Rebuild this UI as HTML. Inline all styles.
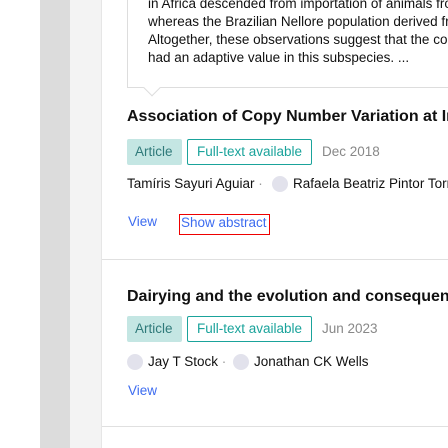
<!DOCTYPE html>
<html><head><style>
*{margin:0;padding:0;box-sizing:border-box}
html,body{width:448px;height:448px;overflow:hidden}
body{background:#fff;font-family:"Liberation Sans",sans-serif}
#w{position:relative;width:448px;height:448px;overflow:hidden}
.a{position:absolute;white-space:nowrap}
.t{font-size:13.5px;color:#111;line-height:18px}
.h{font-size:16px;font-weight:bold;color:#111}
.tag{position:absolute;height:26px;line-height:26px;font-size:13.5px;border-radius:2px}
.art{background:#c4e6e3;color:#2f7a7a;padding:0 8px;width:55px}
.ft{border:1px solid #1aa39b;color:#1aa39b;width:125px;text-align:center;line-height:24px}
.d{font-size:13.5px;color:#888}
.l{font-size:13.5px;color:#3d6cf0}
.c{position:absolute;width:16px;height:16px;border-radius:50%;background:#e2e2ec}
</style></head><body><div id="w">
<div class="a" style="left:40px;top:0;width:30px;height:448px;background:#dcdcdc"></div>
<div class="a" style="left:70px;top:0;width:31px;height:448px;background:#f3f3f3"></div>
<div class="a" style="left:101px;top:0;width:347px;height:448px;background:#fff;border-left:1px solid #e6e6e6"></div>
<div class="a" style="left:127px;top:-2px;width:330px;height:90px;border:1px solid #ddd;border-top:none"></div>
<div class="a" style="left:146px;top:82px;width:12px;height:12px;background:#fff;border-right:1px solid #ddd;border-bottom:1px solid #ddd;transform:rotate(45deg)"></div>
<div class="a t" style="left:148px;top:-5px">in Africa descended from importation of animals from</div>
<div class="a t" style="left:148px;top:13px">whereas the Brazilian Nellore population derived from</div>
<div class="a t" style="left:148px;top:31px">Altogether, these observations suggest that the copy</div>
<div class="a t" style="left:148px;top:49px">had an adaptive value in this subspecies. ...</div>
<div class="a h" style="left:127px;top:108px">Association of Copy Number Variation at Intron 3</div>
<div class="tag art" style="left:127px;top:139px">Article</div>
<div class="tag ft" style="left:187px;top:139px">Full-text available</div>
<div class="a d" style="left:322px;top:144px">Dec 2018</div>
<div class="a t" style="left:127px;top:175px">Tamíris Sayuri Aguiar <span style="color:#999">·</span></div>
<div class="c" style="left:272px;top:176px"></div>
<div class="a t" style="left:293px;top:175px">Rafaela Beatriz Pintor Torrecilha</div>
<div class="a l" style="left:128px;top:214px">View</div>
<div class="a l" style="left:179px;top:214px;width:91px;height:21px;border:1px solid #e00;padding-left:1px;overflow:hidden">Show abstract</div>
<div class="a" style="left:102px;top:259px;width:346px;height:1px;background:#e0e0e0"></div>
<div class="a h" style="left:127px;top:288px">Dairying and the evolution and consequences of</div>
<div class="tag art" style="left:127px;top:316px">Article</div>
<div class="tag ft" style="left:187px;top:316px">Full-text available</div>
<div class="a d" style="left:322px;top:321px">Jun 2023</div>
<div class="c" style="left:127px;top:354px"></div>
<div class="a t" style="left:148px;top:353px">Jay T Stock <span style="color:#999">·</span></div>
<div class="c" style="left:233px;top:354px"></div>
<div class="a t" style="left:254px;top:353px">Jonathan CK Wells</div>
<div class="a l" style="left:128px;top:383px">View</div>
<div class="a" style="left:102px;top:426px;width:346px;height:1px;background:#e0e0e0"></div>
</div></body></html>
